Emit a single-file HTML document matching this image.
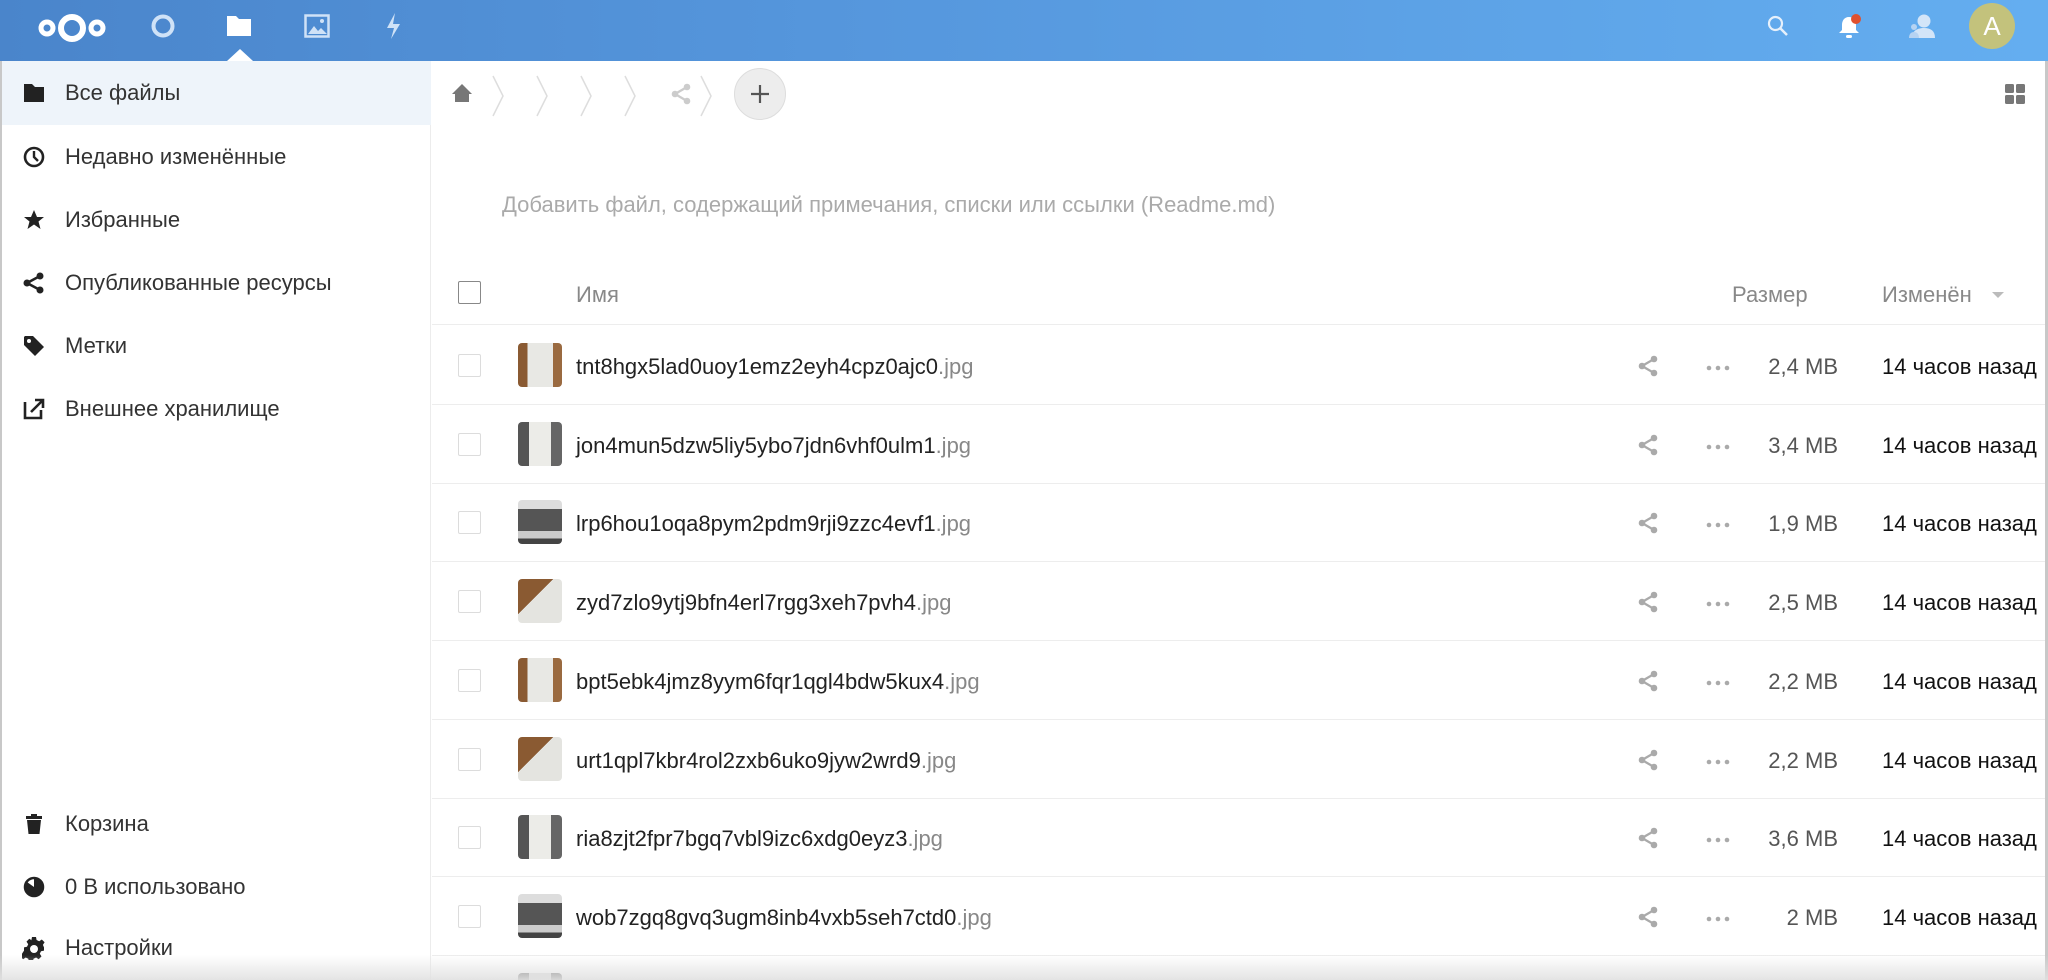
<!DOCTYPE html>
<html><head><meta charset="utf-8">
<style>
*{margin:0;padding:0;box-sizing:border-box}
html,body{width:2048px;height:980px;overflow:hidden;background:#fff;font-family:"Liberation Sans","Noto Sans CJK SC",sans-serif;}
#wrap{position:relative;width:2048px;height:980px;overflow:hidden}
#hdr{position:absolute;left:0;top:0;width:2048px;height:61px;background:linear-gradient(90deg,#4a85cb 0%,#5596dc 40%,#64aef0 100%);}
.ab{position:absolute}
#side{position:absolute;left:0;top:61px;width:431px;height:919px;border-right:1px solid #ececec;background:#fff;border-left:2px solid #c8c8c8}
.nav{position:absolute;left:0;width:429px;height:63px;display:flex;align-items:center;font-size:22px;color:#333}
.nav svg{position:absolute;left:20px;top:50%;transform:translateY(-50%)}
.nav span{position:absolute;left:63px;top:19px}
.row{position:absolute;left:432px;width:1614px;height:79px;border-bottom:1px solid #ededed;overflow:hidden}
.cb{position:absolute;left:26px;top:28px;width:23px;height:23px;border:1.5px solid #dcdcdc;border-radius:2px;background:#fff}
.th{position:absolute;left:86px;top:17px;width:44px;height:44px;border-radius:4px;overflow:hidden}
.fn{position:absolute;left:144px;top:28px;font-size:22px;color:#222}
.fn i{font-style:normal;color:#888}
.sh{position:absolute;left:1205px;top:28px}
.dt{position:absolute;left:1274px;top:32px}
.sz{position:absolute;right:208px;top:28px;font-size:22px;color:#555;text-align:right}
.dte{position:absolute;left:1450px;top:28px;font-size:22px;color:#111;white-space:nowrap}
</style></head><body><div id="wrap">
<div id="hdr">
 <svg class="ab" style="left:36px;top:10px" width="72" height="36" viewBox="0 0 72 36">
  <circle cx="11" cy="18" r="6" fill="none" stroke="#fff" stroke-width="5"/>
  <circle cx="36" cy="18" r="11" fill="none" stroke="#fff" stroke-width="6"/>
  <circle cx="61" cy="18" r="6" fill="none" stroke="#fff" stroke-width="5"/>
 </svg>
 <svg class="ab" style="left:150px;top:13px" width="26" height="26"><circle cx="13" cy="13" r="9.5" fill="none" stroke="#cfe2f7" stroke-width="4"/></svg>
 <svg class="ab" style="left:226px;top:14px" width="26" height="24"><path d="M1 2h9l3 3h12v17H1z" fill="#fff"/></svg>
 <svg class="ab" style="left:304px;top:14px" width="26" height="24"><rect x="1.5" y="1.5" width="23" height="21" fill="none" stroke="#cfe2f7" stroke-width="2.5"/><path d="M4 20l6-8 4 5 3-3 6 6z" fill="#cfe2f7"/><circle cx="18" cy="7" r="2" fill="#cfe2f7"/></svg>
 <svg class="ab" style="left:384px;top:12px" width="20" height="28"><path d="M11 1L3 16h7l-3 11 9-15h-7z" fill="#cfe2f7"/></svg>
 <div class="ab" style="left:227px;top:49px;width:0;height:0;border-left:13px solid transparent;border-right:13px solid transparent;border-bottom:12px solid #fff"></div>
 <svg class="ab" style="left:1766px;top:14px" width="24" height="24"><circle cx="9.5" cy="9.5" r="6.5" fill="none" stroke="#e6f0fb" stroke-width="2.2"/><path d="M14 14l7 7" stroke="#e6f0fb" stroke-width="2.5"/></svg>
 <svg class="ab" style="left:1836px;top:12px" width="30" height="28"><path d="M13 5c-5 0-7 4-7 8v5l-3 3h20l-3-3v-5c0-4-2-8-7-8z" fill="#fff"/><rect x="10" y="23" width="6" height="3" rx="1.5" fill="#fff"/><circle cx="20" cy="7" r="5" fill="#e0502e"/></svg>
 <svg class="ab" style="left:1907px;top:12px" width="30" height="28"><circle cx="17" cy="9" r="6.5" fill="#d3e5f8"/><path d="M5 26c0-7 5-10 12-10s11 3 11 10z" fill="#d3e5f8"/><circle cx="7" cy="15" r="3" fill="#b6d3f2"/><path d="M2 26c0-4 2-6 5-6s5 2 5 6z" fill="#b6d3f2"/></svg>
 <div class="ab" style="left:1969px;top:3px;width:46px;height:46px;border-radius:50%;background:#c3c27c;color:#fff;font-size:26px;text-align:center;line-height:46px">A</div>
</div>

<div id="side">
 <div class="nav" style="top:0;background:#eef4fa;height:64px"><svg width="24" height="22"><path d="M2 2h8l3 3h9v15H2z" fill="#222"/></svg><span>Все файлы</span></div>
 <div class="nav" style="top:64px"><svg width="24" height="24"><circle cx="12" cy="12" r="9" fill="none" stroke="#222" stroke-width="2.6"/><path d="M12 6v6l4 4" stroke="#222" stroke-width="2.4" fill="none"/></svg><span>Недавно изменённые</span></div>
 <div class="nav" style="top:127px"><svg width="24" height="24"><path d="M12 2l3 7h7l-5.5 4.5 2 7.5-6.5-4.5-6.5 4.5 2-7.5L2 9h7z" fill="#222"/></svg><span>Избранные</span></div>
 <div class="nav" style="top:190px"><svg width="24" height="24"><circle cx="18" cy="5" r="3.5" fill="#222"/><circle cx="18" cy="19" r="3.5" fill="#222"/><circle cx="5" cy="12" r="3.5" fill="#222"/><path d="M5 12L18 5M5 12l13 7" stroke="#222" stroke-width="2.5"/></svg><span>Опубликованные ресурсы</span></div>
 <div class="nav" style="top:253px"><svg width="24" height="24"><path d="M2 3v8l11 11 9-9L11 2H3z" fill="#222"/><circle cx="7" cy="7" r="2" fill="#fff"/></svg><span>Метки</span></div>
 <div class="nav" style="top:316px"><svg width="24" height="24"><path d="M3 5v16h16v-8" fill="none" stroke="#222" stroke-width="2.6"/><path d="M9 15L20 4M13 3h8v8" fill="none" stroke="#222" stroke-width="2.6"/></svg><span>Внешнее хранилище</span></div>
 <div class="nav" style="top:731px"><svg width="24" height="24"><path d="M4 4h16v3H4z M9 2h6v2H9z M5 8h14l-1.5 14h-11z" fill="#222"/></svg><span>Корзина</span></div>
 <div class="nav" style="top:794px"><svg width="24" height="24"><circle cx="12" cy="12" r="9" fill="none" stroke="#222" stroke-width="2.5"/><path d="M12 3a9 9 0 0 1 0 18z" fill="#222"/><path d="M12 12L5 7a9 9 0 0 0 7 14z" fill="#222"/></svg><span>0 B использовано</span></div>
 <div class="nav" style="top:855px;height:63px"><svg width="24" height="24"><path d="M10 1h4l.6 3 2.6 1.2 2.6-1.7 2.8 2.8-1.7 2.6L22 11.4v3.2l-3 .6-1.2 2.6 1.7 2.6-2.8 2.8-2.6-1.7-2.6 1.2-.6 3h-4l-.6-3-2.6-1.2-2.6 1.7-2.8-2.8 1.7-2.6L2 14.6v-3.2l3-.6 1.2-2.6-1.7-2.6 2.8-2.8 2.6 1.7L9.4 4z" fill="#222"/><circle cx="12" cy="13" r="4" fill="#fff"/></svg><span>Настройки</span></div>
</div>

<svg class="ab" style="left:450px;top:82px" width="24" height="22"><path d="M12 2l10 10h-3v8H5v-8H2z" fill="#777"/></svg>
<svg class="ab" style="left:490px;top:74px" width="160" height="44" fill="none" stroke="#ddd" stroke-width="1.5">
 <path d="M3 2l10 20L3 42"/><path d="M47 2l10 20L47 42"/><path d="M91 2l10 20L91 42"/><path d="M135 2l10 20-10 20"/></svg>
<svg class="ab" style="left:670px;top:82px" width="22" height="24"><circle cx="17" cy="5" r="3.3" fill="#ccc"/><circle cx="17" cy="19" r="3.3" fill="#ccc"/><circle cx="5" cy="12" r="3.3" fill="#ccc"/><path d="M5 12L17 5M5 12l12 7" stroke="#ccc" stroke-width="2.3"/></svg>
<svg class="ab" style="left:698px;top:74px" width="16" height="44" fill="none" stroke="#ddd" stroke-width="1.5"><path d="M3 2l10 20L3 42"/></svg>
<div class="ab" style="left:734px;top:68px;width:52px;height:52px;border-radius:50%;background:#ededed;border:1px solid #ddd"></div>
<svg class="ab" style="left:750px;top:84px" width="20" height="20"><path d="M10 1v18M1 10h18" stroke="#555" stroke-width="2.2"/></svg>
<svg class="ab" style="left:2004px;top:83px" width="22" height="22" fill="#777"><rect x="1" y="1" width="9" height="9" rx="1.5"/><rect x="12" y="1" width="9" height="9" rx="1.5"/><rect x="1" y="12" width="9" height="9" rx="1.5"/><rect x="12" y="12" width="9" height="9" rx="1.5"/></svg>

<div class="ab" style="left:502px;top:192px;font-size:22px;color:#aaa">Добавить файл, содержащий примечания, списки или ссылки (Readme.md)</div>

<div class="row" style="top:246px">
 <div class="cb" style="border-color:#888;top:35px;left:26px"></div>
 <div class="ab" style="left:144px;top:36px;font-size:22px;color:#888">Имя</div>
 <div class="ab" style="left:1300px;top:36px;font-size:22px;color:#888">Размер</div>
 <div class="ab" style="left:1450px;top:36px;font-size:22px;color:#888">Изменён</div>
 <div class="ab" style="left:1560px;top:46px;border-left:6px solid transparent;border-right:6px solid transparent;border-top:6px solid #bbb"></div>
</div>

<div id="rows"></div>
<script>
var d=[["tnt8hgx5lad0uoy1emz2eyh4cpz0ajc0","2,4 MB","b1"],["jon4mun5dzw5liy5ybo7jdn6vhf0ulm1","3,4 MB","g1"],["lrp6hou1oqa8pym2pdm9rji9zzc4evf1","1,9 MB","w"],["zyd7zlo9ytj9bfn4erl7rgg3xeh7pvh4","2,5 MB","b2"],["bpt5ebk4jmz8yym6fqr1qgl4bdw5kux4","2,2 MB","b1"],["urt1qpl7kbr4rol2zxb6uko9jyw2wrd9","2,2 MB","b2"],["ria8zjt2fpr7bgq7vbl9izc6xdg0eyz3","3,6 MB","g1"],["wob7zgq8gvq3ugm8inb4vxb5seh7ctd0","2 MB","w"],["","",""]];
var th={b1:"linear-gradient(90deg,#8a5a32 0 22%,#e8e8e4 22% 80%,#9a6a40 80%)",b2:"linear-gradient(135deg,#8a5a32 0 40%,#e4e4e0 40%)",g1:"linear-gradient(90deg,#555 0 25%,#ecece8 25% 75%,#666 75%)",w:"linear-gradient(180deg,#ddd 0 20%,#555 20% 70%,#ccc 70% 88%,#444 88%)"};
var share='<svg width="22" height="24"><circle cx="17" cy="5" r="3.3" fill="#aaa"/><circle cx="17" cy="19" r="3.3" fill="#aaa"/><circle cx="5" cy="12" r="3.3" fill="#aaa"/><path d="M5 12L17 5M5 12l12 7" stroke="#aaa" stroke-width="2.3"/></svg>';
var dots='<svg width="24" height="6" fill="#aaa"><circle cx="3" cy="3" r="2.3"/><circle cx="12" cy="3" r="2.3"/><circle cx="21" cy="3" r="2.3"/></svg>';
var h="";
for(var i=0;i<d.length;i++){var t=326+i*78.7;var r=d[i];
var hh=r[0]?'':'height:'+(980-t)+'px;border-bottom:none;';
h+='<div class="row" style="top:'+t+'px;'+hh+'"><div class="cb"></div><div class="th" style="background:'+(th[r[2]]||"linear-gradient(90deg,#777 0 25%,#ddd 25% 75%,#777 75%)")+'"></div>';
if(r[0])h+='<div class="fn">'+r[0]+'<i>.jpg</i></div><div class="sh">'+share+'</div><div class="dt">'+dots+'</div><div class="sz">'+r[1]+'</div><div class="dte">14 часов назад</div>';
h+='</div>';}
document.getElementById("rows").innerHTML=h;
</script>
<div class="ab" style="left:2045px;top:61px;width:3px;height:919px;background:#c8c8c8"></div>
<div class="ab" style="left:0;top:955px;width:2048px;height:25px;background:linear-gradient(180deg,rgba(255,255,255,0),rgba(225,225,225,.9))"></div>
</div></body></html>
